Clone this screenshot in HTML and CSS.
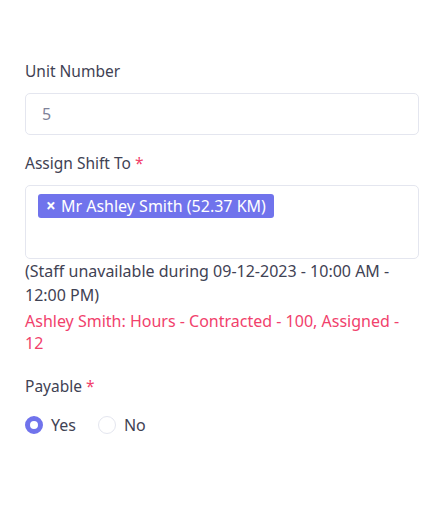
FILE: index.html
```html
<!DOCTYPE html>
<html lang="en">
<head>
    <meta charset="utf-8">
    <title>Shift form</title>
    <link rel="stylesheet" href="styles.css">
</head>
<body>
    <div class="form">
        <div class="field">
            <label class="label">Unit Number</label>
            <input class="input" type="text" value="5">
        </div>

        <div class="field field-assign">
            <label class="label">Assign Shift To <span class="req">*</span></label>
            <div class="select-box">
                <span class="tag"><span class="tag-x">×</span> Mr Ashley Smith (52.37 KM)</span>
            </div>
            <p class="note">(Staff unavailable during 09-12-2023 - 10:00 AM - 12:00 PM)</p>
            <p class="warn">Ashley Smith: Hours - Contracted - 100, Assigned - 12</p>
        </div>

        <div class="field">
            <label class="label">Payable <span class="req">*</span></label>
            <div class="radios">
                <label class="radio"><span class="dot checked"></span>Yes</label>
                <label class="radio"><span class="dot"></span>No</label>
            </div>
        </div>
    </div>
</body>
</html>
```

FILE: styles.css
```css
body {
    margin: 0;
    font-family: "Noto Sans", sans-serif;
    font-size: 16px;
    color: #3f4254;
    background: #fff;
}

.form {
    padding: 60px 23px 0 25px;
}

.field {
    margin-bottom: 17px;
}

.field-assign {
    margin-bottom: 21px;
}

.label {
    display: block;
    font-size: 15.5px;
    line-height: 22px;
    margin-bottom: 11px;
    color: #3f4254;
}

.req {
    color: #f1416c;
}

.input {
    box-sizing: border-box;
    width: 100%;
    height: 42px;
    border: 1px solid #e4e6ef;
    border-radius: 5px;
    padding: 0 16px;
    font-family: inherit;
    font-size: 16px;
    color: #7e8299;
    outline: none;
}

.select-box {
    box-sizing: border-box;
    height: 74px;
    margin-top: 1px;
    border: 1px solid #e4e6ef;
    border-radius: 5px;
    padding: 8px 12px;
}

.tag {
    display: inline-block;
    background: #7073ec;
    color: #fff;
    font-size: 16px;
    line-height: 23px;
    padding: 0 8px;
    border-radius: 3px;
}

.tag-x {
    font-weight: bold;
    font-size: 17px;
    margin-right: 1px;
}

.note {
    margin: 0;
    font-size: 16px;
    line-height: 24px;
    color: #3f4254;
}

.warn {
    margin: 3px 0 0;
    font-size: 16px;
    line-height: 22px;
    color: #f1416c;
}

.radios {
    display: flex;
    gap: 22px;
    margin-top: 17px;
}

.radio {
    display: flex;
    align-items: center;
    gap: 8px;
    font-size: 16px;
    line-height: 22px;
    color: #3f4254;
}

.dot {
    box-sizing: border-box;
    width: 18px;
    height: 18px;
    border-radius: 50%;
    border: 1px solid #e4e6ef;
    background: #fff;
}

.dot.checked {
    border: 5px solid #7073ec;
}
```
